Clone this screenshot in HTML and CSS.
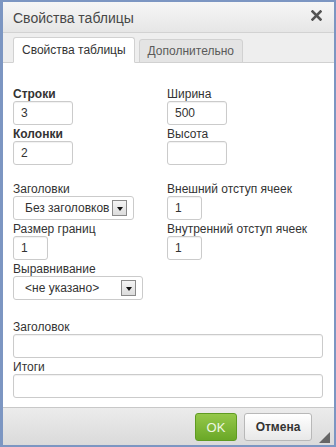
FILE: index.html
```html
<!DOCTYPE html>
<html lang="ru">
<head>
    <meta charset="UTF-8">
    <meta name="viewport" content="width=device-width, initial-scale=1.0">
    <title>Свойства таблицы</title>
    <link rel="stylesheet" href="styles.css">
</head>
<body>
    <div class="dialog">
        <div class="dialog-title">
            <span class="title-text">Свойства таблицы</span>
            <span class="close-button">
                <svg width="11" height="11" viewBox="0 0 11 11">
                    <path d="M1.5 1.5 L9.5 9.5 M9.5 1.5 L1.5 9.5" stroke="#535353" stroke-width="2.6" stroke-linecap="square"/>
                </svg>
            </span>
        </div>

        <div class="tab-bar">
            <div class="tab active">Свойства таблицы</div>
            <div class="tab">Дополнительно</div>
        </div>

        <div class="dialog-body">
            <div class="form-grid">
                <div class="column">
                    <div class="field">
                        <label class="field-label required">Строки</label>
                        <div class="text-input w-60">3</div>
                    </div>
                    <div class="field">
                        <label class="field-label required">Колонки</label>
                        <div class="text-input w-60">2</div>
                    </div>
                </div>
                <div class="column">
                    <div class="field">
                        <label class="field-label">Ширина</label>
                        <div class="text-input w-60">500</div>
                    </div>
                    <div class="field">
                        <label class="field-label">Высота</label>
                        <div class="text-input w-60"></div>
                    </div>
                </div>
            </div>

            <div class="form-grid section">
                <div class="column">
                    <div class="field">
                        <label class="field-label">Заголовки</label>
                        <div class="select-box w-121">
                            <span class="select-value">Без заголовков</span>
                            <span class="select-arrow"></span>
                        </div>
                    </div>
                    <div class="field">
                        <label class="field-label">Размер границ</label>
                        <div class="text-input w-35">1</div>
                    </div>
                    <div class="field">
                        <label class="field-label">Выравнивание</label>
                        <div class="select-box w-130">
                            <span class="select-value">&lt;не указано&gt;</span>
                            <span class="select-arrow"></span>
                        </div>
                    </div>
                </div>
                <div class="column">
                    <div class="field">
                        <label class="field-label">Внешний отступ ячеек</label>
                        <div class="text-input w-35">1</div>
                    </div>
                    <div class="field">
                        <label class="field-label">Внутренний отступ ячеек</label>
                        <div class="text-input w-35">1</div>
                    </div>
                </div>
            </div>

            <div class="column wide">
                <div class="field">
                    <label class="field-label">Заголовок</label>
                    <div class="text-input full"></div>
                </div>
                <div class="field">
                    <label class="field-label">Итоги</label>
                    <div class="text-input full"></div>
                </div>
            </div>
        </div>

        <div class="dialog-footer">
            <button class="button ok">OK</button>
            <button class="button cancel">Отмена</button>
            <span class="resize-grip"></span>
        </div>
    </div>
</body>
</html>
```

FILE: styles.css
```css
* {
    box-sizing: border-box;
}

body {
    margin: 0;
    background: #ffffff;
    font-family: "Liberation Sans", Arial, sans-serif;
    font-size: 12px;
    color: #333333;
}

.dialog {
    width: 336px;
    height: 447px;
    display: flex;
    flex-direction: column;
    border: 2px solid #7c96c2;
    border-left-width: 3px;
    background: #ffffff;
}

.dialog-title {
    height: 31px;
    flex-shrink: 0;
    display: flex;
    align-items: center;
    justify-content: space-between;
    padding: 0 12px 0 10px;
    background: linear-gradient(#f6f6f6, #e6e6e6);
    border-bottom: 1px solid #d2d2d2;
}

.title-text {
    font-size: 14px;
    color: #474747;
    margin-top: 1px;
}

.close-button {
    display: flex;
    margin-top: -3px;
}

.tab-bar {
    height: 30px;
    flex-shrink: 0;
    display: flex;
    align-items: flex-end;
    gap: 4px;
    padding-left: 10px;
    background: #eeeeee;
    border-bottom: 1px solid #d1d1d1;
}

.tab {
    height: 24px;
    margin-bottom: -1px;
    padding: 0 8px;
    display: flex;
    align-items: center;
    background: #e4e4e4;
    color: #5a5a5a;
    border: 1px solid #d1d1d1;
    border-radius: 3px 3px 0 0;
}

.tab.active {
    height: 26px;
    background: #ffffff;
    color: #333333;
    border-bottom-color: #ffffff;
}

.dialog-body {
    flex: 1;
    padding: 24px 12px 0 10px;
}

.form-grid {
    display: grid;
    grid-template-columns: 154px 1fr;
}

.form-grid.section {
    margin-top: 17px;
}

.column {
    display: flex;
    flex-direction: column;
    gap: 2px;
}

.column.wide {
    margin-top: 20px;
}

.field-label {
    display: block;
    line-height: 14px;
    height: 14px;
    white-space: nowrap;
}

.field-label.required {
    font-weight: bold;
}

.text-input {
    height: 24px;
    padding: 0 7px;
    line-height: 22px;
    font-size: 12px;
    border: 1px solid #cbcbcb;
    border-radius: 3px;
    background: #ffffff;
    box-shadow: inset 0 1px 1px rgba(0, 0, 0, 0.06);
}

.w-35 { width: 35px; }
.w-60 { width: 60px; }
.w-121 { width: 121px; }
.w-130 { width: 130px; }
.full { width: 310px; }

.select-box {
    height: 24px;
    display: flex;
    align-items: center;
    padding-left: 11px;
    padding-right: 6px;
    border: 1px solid #cbcbcb;
    border-radius: 3px;
    background: #ffffff;
}

.select-value {
    flex: 1;
    overflow: hidden;
    white-space: nowrap;
}

.select-arrow {
    width: 15px;
    height: 16px;
    flex-shrink: 0;
    display: flex;
    align-items: center;
    justify-content: center;
    border: 1px solid #8a8a8a;
    background: linear-gradient(#f4f4f4, #dcdcdc);
}

.select-arrow::before {
    content: "";
    border-left: 3.5px solid transparent;
    border-right: 3.5px solid transparent;
    border-top: 4px solid #111111;
    margin-top: 1px;
}

.dialog-footer {
    position: relative;
    height: 38px;
    flex-shrink: 0;
    display: flex;
    justify-content: flex-end;
    align-items: flex-start;
    gap: 7px;
    padding: 5px 22px 0 0;
    background: linear-gradient(#ececec, #dadada);
    border-top: 1px solid #c8c8c8;
}

.button {
    height: 28px;
    padding: 0;
    font-family: "Liberation Sans", Arial, sans-serif;
    font-size: 12px;
    font-weight: bold;
    border-radius: 3px;
    cursor: pointer;
}

.button.ok {
    width: 42px;
    color: #eef7e2;
    background: linear-gradient(#95c84a, #6aa827);
    border: 1px solid #5f9b22;
    font-size: 13px;
    font-weight: normal;
}

.button.cancel {
    width: 68px;
    color: #333333;
    background: linear-gradient(#ffffff, #e8e8e8);
    border: 1px solid #b8b8b8;
}

.resize-grip {
    position: absolute;
    right: 4px;
    bottom: 2px;
    width: 0;
    height: 0;
    border-left: 11px solid transparent;
    border-bottom: 11px solid #666666;
}
```
